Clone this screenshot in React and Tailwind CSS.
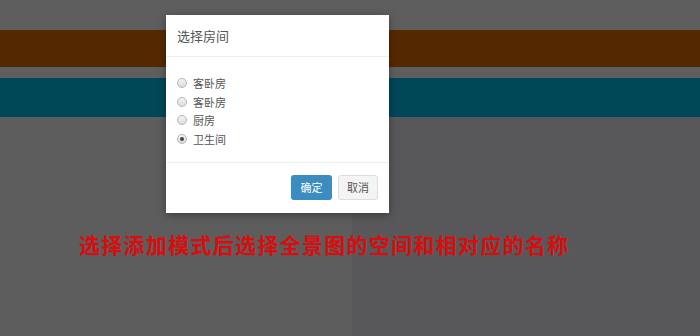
import React from 'react';

const rooms = [
  { name: '客卧房', checked: false },
  { name: '客卧房', checked: false },
  { name: '厨房', checked: false },
  { name: '卫生间', checked: true },
];

const Radio = ({ checked }) => (
  <span className="flex items-center justify-center w-[10px] h-[10px] rounded-full border border-[#b5b5b5] bg-gradient-to-b from-[#f4f4f4] to-[#dcdcdc]">
    {checked && <span className="w-[4px] h-[4px] rounded-full bg-[#444]" />}
  </span>
);

const RoomDialog = () => (
  <div className="absolute left-[166px] top-[15px] w-[223px] h-[198px] bg-white shadow-[0_2px_8px_rgba(0,0,0,0.35)] flex flex-col">
    <div className="h-[42px] px-[11px] flex items-center border-b border-[#eeeeee] text-[13px] text-[#555]">
      选择房间
    </div>
    <div className="flex-1 px-[11px] pt-[17px] flex flex-col border-b border-[#eeeeee]">
      {rooms.map((room, i) => (
        <label key={i} className="h-[18.5px] flex items-center gap-[6px] text-[11px] text-[#555]">
          <Radio checked={room.checked} />
          <span>{room.name}</span>
        </label>
      ))}
    </div>
    <div className="h-[50px] flex items-center justify-end gap-[6px] pr-[11px] pb-[1px]">
      <button className="w-[41px] h-[25px] rounded-[3px] bg-[#3a8cc1] text-white text-[11px]">确定</button>
      <button className="w-[40px] h-[25px] rounded-[3px] bg-[#f4f4f4] border border-[#dddddd] text-[#555] text-[11px]">取消</button>
    </div>
  </div>
);

export default function App() {
  return (
    <div
      className="relative w-[700px] h-[336px] overflow-hidden bg-[#5e5e5e] flex flex-col"
      style={{ fontFamily: '"Noto Sans CJK SC", "Liberation Sans", sans-serif' }}
    >
      <div className="h-[30px]" />
      <div className="h-[37px] bg-[#552900]" />
      <div className="h-[11px]" />
      <div className="h-[39px] bg-[#004758]" />
      <div className="flex-1 flex">
        <div className="w-[352px] bg-[#5d5d5d] pt-[115px] pl-[79px]">
          <p className="relative z-10 whitespace-nowrap text-[21px] leading-[24px] font-bold tracking-[1.3px] text-[#dc0c0c]">
            选择添加模式后选择全景图的空间和相对应的名称
          </p>
        </div>
        <div className="flex-1 bg-[#58585a]" />
      </div>
      <RoomDialog />
    </div>
  );
}
